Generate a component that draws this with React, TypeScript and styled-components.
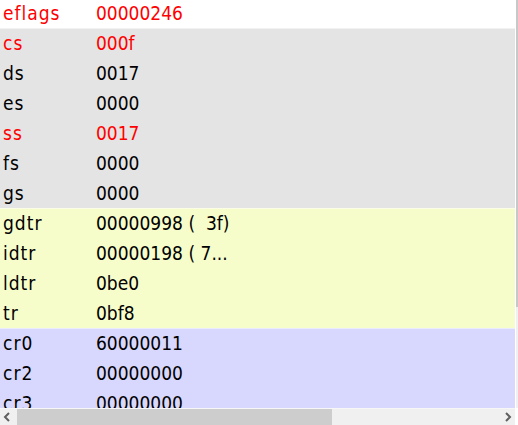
import * as React from "react";
import styled, { createGlobalStyle } from "styled-components";

type Reg = { name: string; value: string; changed?: boolean };
type Group = { tone: "plain" | "seg" | "table" | "ctrl"; regs: Reg[] };

const groups: Group[] = [
    { tone: "plain", regs: [{ name: "eflags", value: "00000246", changed: true }] },
    {
        tone: "seg", regs: [
            { name: "cs", value: "000f", changed: true },
            { name: "ds", value: "0017" },
            { name: "es", value: "0000" },
            { name: "ss", value: "0017", changed: true },
            { name: "fs", value: "0000" },
            { name: "gs", value: "0000" },
        ]
    },
    {
        tone: "table", regs: [
            { name: "gdtr", value: "00000998 (  3f)" },
            { name: "idtr", value: "00000198 ( 7..." },
            { name: "ldtr", value: "0be0" },
            { name: "tr", value: "0bf8" },
        ]
    },
    {
        tone: "ctrl", regs: [
            { name: "cr0", value: "60000011" },
            { name: "cr2", value: "00000000" },
            { name: "cr3", value: "00000000" },
        ]
    },
];

const toneColor = {
    plain: "#ffffff",
    seg: "#e4e4e4",
    table: "#f6fdcb",
    ctrl: "#d8d8fe",
};

const GlobalStyle = createGlobalStyle`
    html, body {
        margin: 0;
        padding: 0;
        background: #ffffff;
    }
    body {
        font-family: "DejaVu Sans Condensed", "DejaVu Sans", "Liberation Sans", sans-serif;
        font-stretch: condensed;
    }
`;

export default function App() {
    return <Window>
        <GlobalStyle />
        <Body>
            <Viewport>
                <RegList>
                    {groups.map((g, gi) =>
                        <RegGroup key={gi} tone={g.tone}>
                            {g.regs.map(r =>
                                <RegRow key={r.name} changed={!!r.changed}>
                                    <RegName>{r.name}</RegName>
                                    <RegValue>{r.value}</RegValue>
                                </RegRow>
                            )}
                        </RegGroup>
                    )}
                </RegList>
            </Viewport>
            <VTrack>
                <VThumb />
            </VTrack>
        </Body>
        <HScroll>
            <Arrow>
                <svg width="8" height="10" viewBox="0 0 8 10">
                    <path d="M6 1 L2 5 L6 9" fill="none" stroke="#606060" strokeWidth="2" />
                </svg>
            </Arrow>
            <HTrack>
                <HThumb />
            </HTrack>
            <Arrow>
                <svg width="8" height="10" viewBox="0 0 8 10">
                    <path d="M2 1 L6 5 L2 9" fill="none" stroke="#606060" strokeWidth="2" />
                </svg>
            </Arrow>
        </HScroll>
    </Window>;
}

const Window = styled.div`
    width: 518px;
    height: 425px;
    display: flex;
    flex-direction: column;
    overflow: hidden;
    background: #ffffff;
`;

const Body = styled.div`
    flex: 1;
    min-height: 0;
    display: flex;
    gap: 1px;
`;

const Viewport = styled.div`
    width: 515px;
    overflow: hidden;
`;

const RegList = styled.div`
    margin-top: -2px;
`;

const RegGroup = styled.div<{ tone: Group["tone"] }>`
    background: ${p => toneColor[p.tone]};
    box-shadow: inset 0 1px 0 rgba(255, 255, 255, 0.5);
`;

const RegRow = styled.div<{ changed: boolean }>`
    display: grid;
    grid-template-columns: 93px 1fr;
    height: 30px;
    line-height: 30px;
    padding-left: 3px;
    font-size: 19px;
    color: ${p => p.changed ? "#ff0000" : "#000000"};
`;

const RegName = styled.span`
    white-space: nowrap;
    letter-spacing: 1px;
`;

const RegValue = styled.span`
    white-space: pre;
`;

const VTrack = styled.div`
    flex: 1;
    background: #f0f0f0;
    display: flex;
    flex-direction: column;
`;

const VThumb = styled.div`
    height: 307px;
    background: #c8c8c8;
`;

const HScroll = styled.div`
    height: 17px;
    width: 515px;
    display: flex;
    background: #f0f0f0;
    border-top: 1px solid #f7f7f7;
    box-sizing: border-box;
`;

const Arrow = styled.div`
    width: 14px;
    display: flex;
    align-items: center;
    justify-content: center;
`;

const HTrack = styled.div`
    flex: 1;
    display: flex;
    padding-left: 3px;
`;

const HThumb = styled.div`
    width: 315px;
    background: #cdcdcd;
`;
